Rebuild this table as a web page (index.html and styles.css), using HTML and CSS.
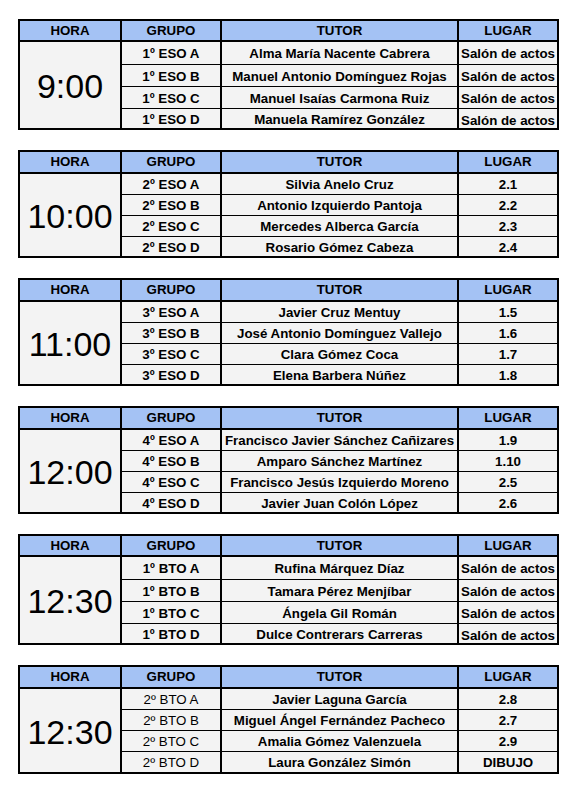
FILE: index.html
```html
<!DOCTYPE html>
<html lang="es">
<head>
<meta charset="utf-8">
<title>Horario de tutorías</title>
<link rel="stylesheet" href="styles.css">
</head>
<body>
<div class="page">

  <div class="sched tall">
    <div class="hd">HORA</div><div class="hd">GRUPO</div><div class="hd">TUTOR</div><div class="hd">LUGAR</div>
    <div class="time">9:00</div>
    <div class="c b">1º ESO A</div><div class="c b">Alma María Nacente Cabrera</div><div class="c b">Salón de actos</div>
    <div class="c b">1º ESO B</div><div class="c b">Manuel Antonio Domínguez Rojas</div><div class="c b">Salón de actos</div>
    <div class="c b">1º ESO C</div><div class="c b">Manuel Isaías Carmona Ruiz</div><div class="c b">Salón de actos</div>
    <div class="c b">1º ESO D</div><div class="c b">Manuela Ramírez González</div><div class="c b low">Salón de actos</div>
  </div>

  <div class="sched">
    <div class="hd">HORA</div><div class="hd">GRUPO</div><div class="hd">TUTOR</div><div class="hd">LUGAR</div>
    <div class="time">10:00</div>
    <div class="c b">2º ESO A</div><div class="c b">Silvia Anelo Cruz</div><div class="c b">2.1</div>
    <div class="c b">2º ESO B</div><div class="c b">Antonio Izquierdo Pantoja</div><div class="c b">2.2</div>
    <div class="c b">2º ESO C</div><div class="c b">Mercedes Alberca García</div><div class="c b">2.3</div>
    <div class="c b">2º ESO D</div><div class="c b">Rosario Gómez Cabeza</div><div class="c b">2.4</div>
  </div>

  <div class="sched">
    <div class="hd">HORA</div><div class="hd">GRUPO</div><div class="hd">TUTOR</div><div class="hd">LUGAR</div>
    <div class="time">11:00</div>
    <div class="c b">3º ESO A</div><div class="c b">Javier Cruz Mentuy</div><div class="c b">1.5</div>
    <div class="c b">3º ESO B</div><div class="c b">José Antonio Domínguez Vallejo</div><div class="c b">1.6</div>
    <div class="c b">3º ESO C</div><div class="c b">Clara Gómez Coca</div><div class="c b">1.7</div>
    <div class="c b">3º ESO D</div><div class="c b">Elena Barbera Núñez</div><div class="c b">1.8</div>
  </div>

  <div class="sched">
    <div class="hd">HORA</div><div class="hd">GRUPO</div><div class="hd">TUTOR</div><div class="hd">LUGAR</div>
    <div class="time">12:00</div>
    <div class="c b">4º ESO A</div><div class="c b">Francisco Javier Sánchez Cañizares</div><div class="c b">1.9</div>
    <div class="c b">4º ESO B</div><div class="c b">Amparo Sánchez Martínez</div><div class="c b">1.10</div>
    <div class="c b">4º ESO C</div><div class="c b">Francisco Jesús Izquierdo Moreno</div><div class="c b">2.5</div>
    <div class="c b">4º ESO D</div><div class="c b">Javier Juan Colón López</div><div class="c b">2.6</div>
  </div>

  <div class="sched tall">
    <div class="hd">HORA</div><div class="hd">GRUPO</div><div class="hd">TUTOR</div><div class="hd">LUGAR</div>
    <div class="time">12:30</div>
    <div class="c b">1º BTO A</div><div class="c b">Rufina Márquez Díaz</div><div class="c b">Salón de actos</div>
    <div class="c b">1º BTO B</div><div class="c b">Tamara Pérez Menjíbar</div><div class="c b">Salón de actos</div>
    <div class="c b">1º BTO C</div><div class="c b">Ángela Gil Román</div><div class="c b">Salón de actos</div>
    <div class="c b">1º BTO D</div><div class="c b">Dulce Contrerars Carreras</div><div class="c b low">Salón de actos</div>
  </div>

  <div class="sched even">
    <div class="hd">HORA</div><div class="hd">GRUPO</div><div class="hd">TUTOR</div><div class="hd">LUGAR</div>
    <div class="time">12:30</div>
    <div class="c">2º BTO A</div><div class="c b">Javier Laguna García</div><div class="c b">2.8</div>
    <div class="c">2º BTO B</div><div class="c b">Miguel Ángel Fernández Pacheco</div><div class="c b">2.7</div>
    <div class="c">2º BTO C</div><div class="c b">Amalia Gómez Valenzuela</div><div class="c b">2.9</div>
    <div class="c">2º BTO D</div><div class="c b">Laura González Simón</div><div class="c b">DIBUJO</div>
  </div>

</div>
</body>
</html>
```

FILE: styles.css
```css
html, body {
  margin: 0;
  padding: 0;
  background: #ffffff;
}

body {
  font-family: "Liberation Sans", Arial, sans-serif;
  color: #000000;
}

.page {
  padding: 19px 0 0 18px;
  display: flex;
  flex-direction: column;
  align-items: flex-start;
  gap: 20px;
}

.sched {
  display: grid;
  grid-template-columns: 100px 98px 235px 98px;
  grid-template-rows: 21px 20px 20px 20px 19px;
  column-gap: 2px;
  row-gap: 1px;
  background: #000000;
  border: 2px solid #000000;
}

.sched.tall {
  grid-template-rows: 20px 22px 21px 21px 19px;
}

.sched.even {
  grid-template-rows: 21px 20px 20px 20px 20px;
}

.hd {
  background: #a4c2f4;
  border-bottom: 1px solid #000000;
  font-weight: bold;
  font-size: 13.3px;
  display: flex;
  align-items: center;
  justify-content: center;
  line-height: 1;
}

.time {
  grid-column: 1;
  grid-row: 2 / span 4;
  background: #f3f3f3;
  font-size: 34px;
  display: flex;
  align-items: center;
  justify-content: center;
  line-height: 1;
  padding-top: 2px;
}

.c {
  background: #f3f3f3;
  font-size: 13.3px;
  display: flex;
  align-items: center;
  justify-content: center;
  white-space: nowrap;
  overflow: hidden;
  line-height: 1;
  padding-top: 2px;
}

.c.b {
  font-weight: bold;
}

.c.low {
  align-items: flex-end;
  padding-top: 0;
  padding-bottom: 1px;
}
```
